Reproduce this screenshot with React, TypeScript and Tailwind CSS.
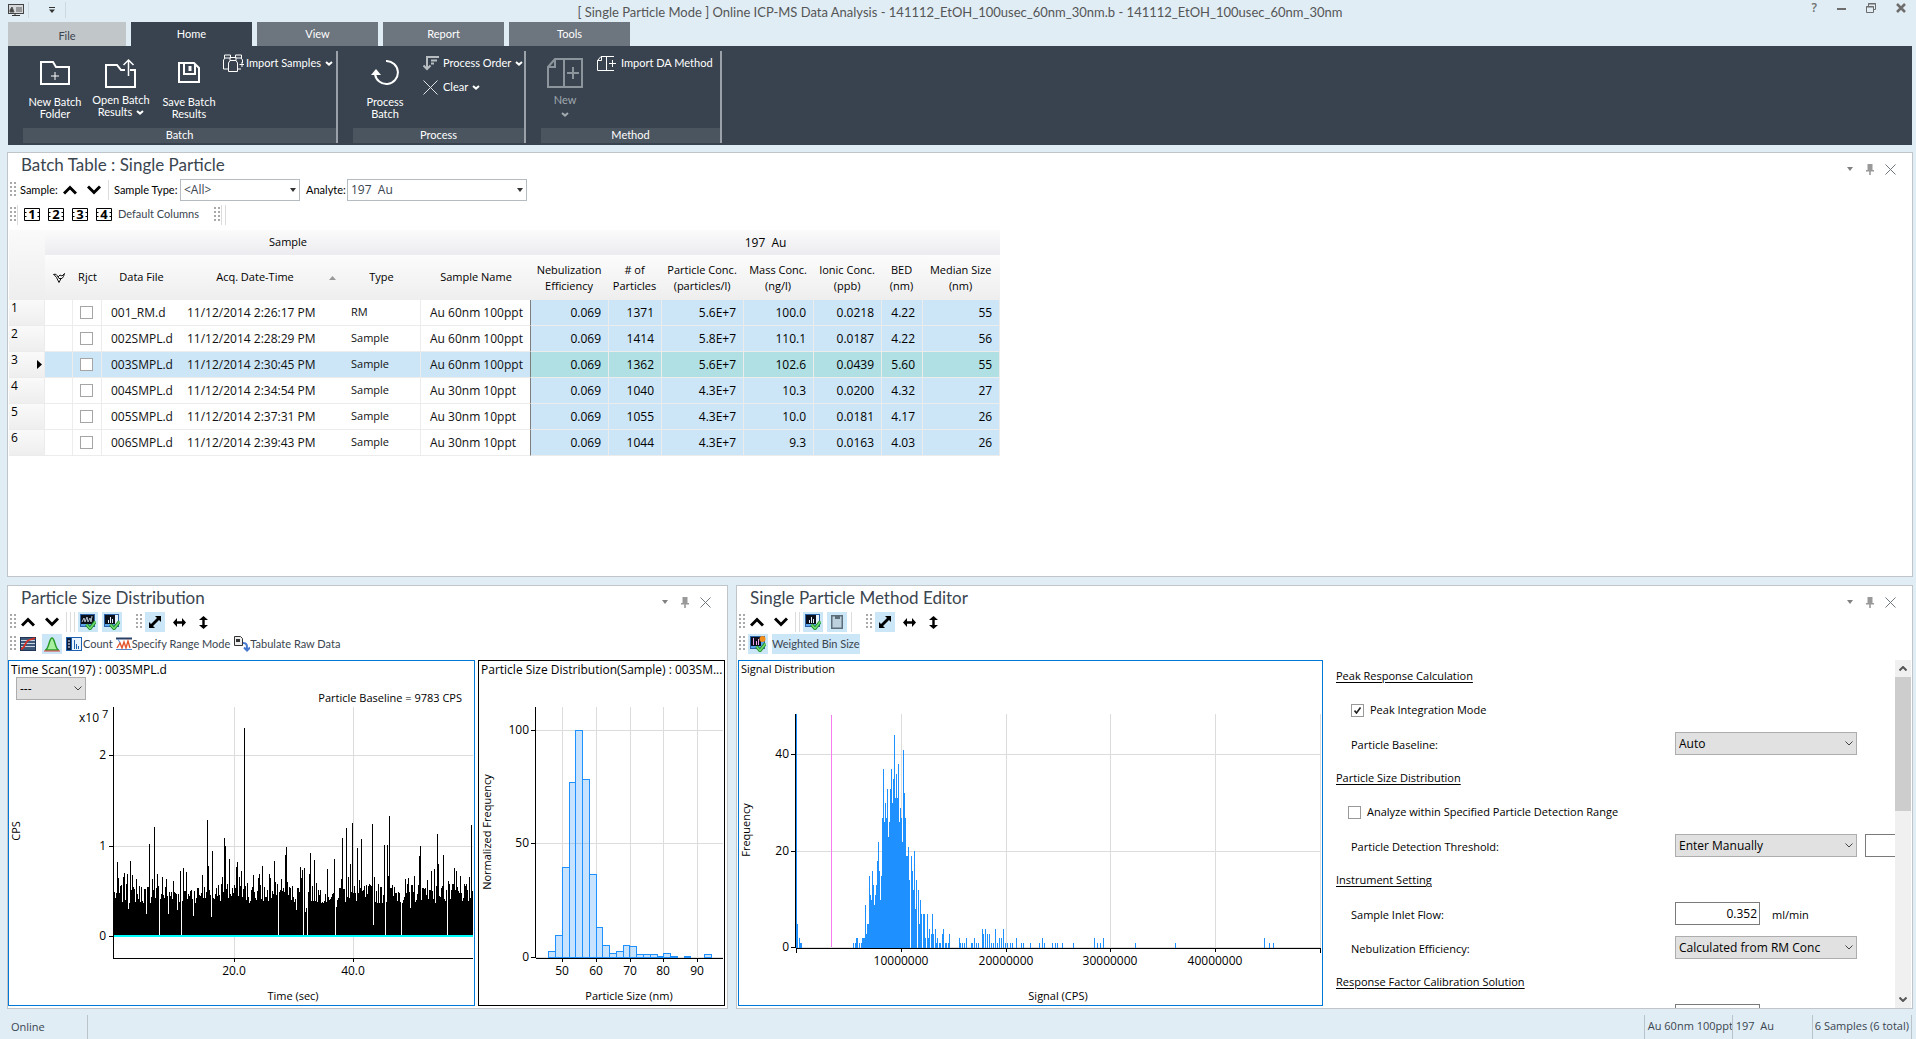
import { useState } from 'react';
import type { ReactNode } from 'react';

const samples = [
  { file: '001_RM.d', date: '11/12/2014 2:26:17 PM', type: 'RM', name: 'Au 60nm 100ppt', values: ['0.069', '1371', '5.6E+7', '100.0', '0.0218', '4.22', '55'] },
  { file: '002SMPL.d', date: '11/12/2014 2:28:29 PM', type: 'Sample', name: 'Au 60nm 100ppt', values: ['0.069', '1414', '5.8E+7', '110.1', '0.0187', '4.22', '56'] },
  { file: '003SMPL.d', date: '11/12/2014 2:30:45 PM', type: 'Sample', name: 'Au 60nm 100ppt', values: ['0.069', '1362', '5.6E+7', '102.6', '0.0439', '5.60', '55'] },
  { file: '004SMPL.d', date: '11/12/2014 2:34:54 PM', type: 'Sample', name: 'Au 30nm 10ppt', values: ['0.069', '1040', '4.3E+7', '10.3', '0.0200', '4.32', '27'] },
  { file: '005SMPL.d', date: '11/12/2014 2:37:31 PM', type: 'Sample', name: 'Au 30nm 10ppt', values: ['0.069', '1055', '4.3E+7', '10.0', '0.0181', '4.17', '26'] },
  { file: '006SMPL.d', date: '11/12/2014 2:39:43 PM', type: 'Sample', name: 'Au 30nm 10ppt', values: ['0.069', '1044', '4.3E+7', '9.3', '0.0163', '4.03', '26'] },
];

const resultColumns = [
  ['Nebulization', 'Efficiency'],
  ['# of', 'Particles'],
  ['Particle Conc.', '(particles/l)'],
  ['Mass Conc.', '(ng/l)'],
  ['Ionic Conc.', '(ppb)'],
  ['BED', '(nm)'],
  ['Median Size', '(nm)'],
];

// [bin, height] of the peaks, dips and empty bins in the time scan
const scanPoints: [number, number][] = [
  [3, 74], [4, 58], [9, 59], [10, 63], [13, 62], [14, 27], [16, 75], [18, 61], [22, 57], [32, 22], [35, 92], [38, 57],
  [40, 109], [43, 62], [45, 0], [48, 59], [52, 57], [54, 22], [59, 55], [63, 26], [66, 65], [67, 0], [69, 68], [72, 64],
  [79, 20], [88, 61], [93, 116], [94, 70], [97, 19], [98, 85], [104, 51], [108, 59], [110, 98], [111, 90], [115, 77],
  [122, 69], [123, 74], [125, 59], [127, 65], [130, 208], [133, 53], [139, 61], [144, 58], [145, 62], [148, 70],
  [155, 62], [156, 58], [160, 75], [161, 54], [164, 0], [167, 57], [171, 81], [172, 89], [173, 54], [182, 26],
  [186, 69], [187, 58], [188, 66], [189, 0], [190, 68], [191, 24], [192, 28], [193, 0], [195, 62], [196, 83],
  [200, 76], [202, 53], [213, 67], [220, 77], [221, 0], [222, 29], [227, 57], [228, 98], [232, 108], [234, 59],
  [236, 72], [238, 113], [243, 88], [245, 56], [247, 97], [258, 112], [259, 11], [260, 59], [270, 91], [271, 0],
  [273, 91], [274, 60], [275, 120], [287, 0], [291, 57], [294, 58], [296, 28], [300, 60], [305, 80], [306, 90],
  [313, 56], [317, 65], [320, 67], [323, 102], [324, 72], [329, 81], [333, 0], [334, 55], [340, 68], [342, 65],
  [346, 60], [355, 59], [357, 111],
];

const scanBins = (() => {
  let seed = 7;
  const bins = Array.from({ length: 359 }, () => {
    seed = (seed * 1103515245 + 12345) % 2147483648;
    return 33 + Math.floor((seed / 2147483648) * 20);
  });
  scanPoints.forEach(([bin, height]) => {
    bins[bin] = height;
  });
  return bins;
})();

// x, width, height
const sizeBars: [number, number, number][] = [
  [69, 7, 6], [76, 7, 22], [83, 7, 90], [90, 6, 175], [96, 7, 227], [103, 7, 178], [110, 7, 83], [117, 6, 30],
  [123, 7, 12], [130, 7, 4], [137, 7, 6], [144, 6, 12], [150, 7, 11], [157, 7, 3], [164, 7, 3], [171, 7, 3],
  [178, 6, 1], [184, 7, 4], [191, 7, 1], [205, 6, 1], [225, 7, 3],
];

const mainPeak = [
  9, 3, 5, 5, 15, 11, 10, 16, 13, 9, 11, 13, 18, 22, 16, 10, 15, 27, 37, 26, 30, 27, 33, 23, 26, 33, 37, 30, 35, 44,
  31, 36, 31, 38, 26, 29, 27, 22, 41, 32, 27, 19, 19, 21, 14, 0, 19, 16, 12, 20, 8, 14, 0, 12, 5, 10, 7, 0, 7, 7, 2, 0,
  7, 2, 4, 0, 3, 7, 3, 0, 4, 1, 2, 0, 1, 1, 0, 3, 4, 0, 1, 1, 0, 1, 3,
];

const signalTail: [number, number][] = [
  [58, 5], [60, 2], [61, 1], [62, 1], [114, 1], [116, 1], [117, 2], [118, 2], [120, 1], [122, 1], [123, 2], [124, 2], [125, 2],
  [220, 2], [221, 1], [223, 1], [225, 1], [227, 2], [232, 1], [233, 1], [235, 2], [237, 1], [239, 1], [243, 4], [244, 3],
  [246, 4], [248, 3], [250, 3], [252, 1], [254, 1], [256, 4], [258, 1], [260, 2], [262, 2], [264, 4], [266, 1], [268, 1],
  [271, 1], [273, 1], [277, 2], [282, 1], [284, 1], [291, 1], [300, 1], [303, 2], [305, 1], [313, 1], [316, 1], [318, 1],
  [323, 1], [334, 1], [355, 2], [358, 1], [361, 1], [364, 2], [396, 1], [436, 1], [525, 2], [530, 1], [534, 1],
];

const signalBars: [number, number][] = [...signalTail, ...mainPeak.map((n, i): [number, number] => [126 + i, n])];

/* ---------- small pieces ---------- */

const Grip = () => (
  <svg className="w-[7px] h-4 shrink-0" viewBox="0 0 7 16" fill="#a9a9a9">
    {[0, 4, 8, 12].map((y) => (
      <g key={y}>
        <rect x="0" y={y} width="2" height="2" />
        <rect x="4" y={y} width="2" height="2" />
      </g>
    ))}
  </svg>
);

const Divider = () => <span className="w-px h-5 bg-[#dcdcdc] shrink-0" />;

const CaretDown = ({ className = '' }: { className?: string }) => (
  <svg className={`w-2 h-[5px] shrink-0 ${className}`} viewBox="0 0 8 5" fill="none" stroke="currentColor" strokeWidth="2">
    <path d="M1 1l3 2.6L7 1" />
  </svg>
);

const IconButton = ({ label, active, children }: { label: string; active?: boolean; children: ReactNode }) => (
  <button aria-label={label} className={`w-5 h-5 shrink-0 flex items-center justify-center ${active ? 'bg-[#cbe6f7]' : ''}`}>
    {children}
  </button>
);

const ChevronUp = () => (
  <svg className="w-3.5 h-2.5" viewBox="0 0 14 10" fill="none" stroke="#000" strokeWidth="3">
    <path d="M1 8.500l6-6 6 6" />
  </svg>
);

const ChevronDown = () => (
  <svg className="w-3.5 h-2.5" viewBox="0 0 14 10" fill="none" stroke="#000" strokeWidth="3">
    <path d="M1 1.500l6 6 6-6" />
  </svg>
);

const ChartCheck = ({ variant }: { variant: 'scan' | 'bars' | 'pink' }) => (
  <svg className="w-4 h-4" viewBox="0 0 16 16">
    <rect x="0.5" y="0.5" width="14" height="12" fill="#5ba3ea" stroke="#2b62a8" />
    <rect x="1" y="1" width={variant === 'scan' ? 13 : 10} height="9" fill="#0b0f1c" />
    {variant === 'scan' && <path d="M2 8l2-4 1 4 2-5 1 5 2-4 1 4 1-6" fill="none" stroke="#b9c4d2" />}
    {variant === 'bars' && <path d="M4.500 9V6M6.500 9V3M8.500 9V5" fill="none" stroke="#e8f2ff" />}
    {variant === 'bars' && <path d="M11 1h3v9h-3z" fill="#e8f2ff" />}
    {variant === 'pink' && <path d="M3.500 9V2M6.500 9V5M8.500 9V3" fill="none" stroke="#f0a6ee" />}
    {variant === 'pink' && <circle cx="12.500" cy="3" r="3" fill="#ef8c1b" />}
    <path d="M6.500 10.500l3.500 4 5.500-7" fill="none" stroke="#1c8a25" strokeWidth="3.400" />
    <path d="M6.500 10.500l3.500 4 5.500-7" fill="none" stroke="#6fd873" strokeWidth="1.600" />
  </svg>
);

const ZoomButtons = () => (
  <div className="flex gap-1 ml-0.5">
    <IconButton label="Zoom both axes" active>
      <svg className="w-3 h-3" viewBox="0 0 12 12">
        <path d="M6 0h6v6l-2-2-6 6 2 2H0V6l2 2 6-6z" fill="#000" />
      </svg>
    </IconButton>
    <IconButton label="Zoom horizontal axis">
      <svg className="w-[13px] h-[9px]" viewBox="0 0 13 9">
        <path d="M4 0v3.300h5V0l4 4.500L9 9V5.700H4V9L0 4.500z" fill="#000" />
      </svg>
    </IconButton>
    <IconButton label="Zoom vertical axis">
      <svg className="w-[9px] h-[13px]" viewBox="0 0 9 13">
        <path d="M0 4h3.300v5H0l4.500 4L9 9H5.700V4H9L4.500 0z" fill="#000" />
      </svg>
    </IconButton>
  </div>
);

const StepButtons = ({ what }: { what: string }) => (
  <div className="flex gap-1 mr-1">
    <IconButton label={`Previous ${what}`}><ChevronUp /></IconButton>
    <IconButton label={`Next ${what}`}><ChevronDown /></IconButton>
  </div>
);

const PanelHeader = ({ title }: { title: string }) => (
  <header className="flex justify-between pl-[13px] pr-3 h-[26px] shrink-0">
    <h2 className="font-[Lato,sans-serif] text-[17px] leading-6 text-[#3a4550]">{title}</h2>
    <div className="flex items-center mt-2 h-4 text-[#808080]">
      <button aria-label="Panel menu" className="w-5">
        <svg className="w-1.5 h-1 mx-auto" viewBox="0 0 6 4" fill="currentColor">
          <path d="M0 0h6L3 4z" />
        </svg>
      </button>
      <button aria-label="Pin panel" className="w-5">
        <svg className="w-2 h-[11px] mx-auto" viewBox="0 0 8 11" fill="#999">
          <path d="M1.500 0h5v6H8v1.500H4.800V11H3.200V7.500H0V6h1.500z" />
        </svg>
      </button>
      <button aria-label="Close panel" className="w-5">
        <svg className="w-[11px] h-[11px] mx-auto" viewBox="0 0 11 11" stroke="#70777d" fill="none">
          <path d="M.5.5l10 10M10.500.5l-10 10" />
        </svg>
      </button>
    </div>
  </header>
);

const FlatSelect = ({ id, value, className }: { id: string; value: string; className: string }) => (
  <div className={`relative ${className}`}>
    <select id={id} className="appearance-none block w-full h-[22px] border border-[#b5bcc1] bg-white pl-[3px] font-['Open_Sans',sans-serif] text-xs text-[#3a4550] whitespace-pre">
      <option>{value}</option>
    </select>
    <svg className="absolute right-1 top-[9px] w-1.5 h-1 pointer-events-none" viewBox="0 0 6 4">
      <path d="M0 0h6L3 4z" fill="#333" />
    </svg>
  </div>
);

const GraySelect = ({ id, label, value, className }: { id: string; label?: string; value: string; className: string }) => (
  <div className={`relative ${className}`}>
    <select id={id} aria-label={label} className="appearance-none block w-full h-[23px] border border-[#adadad] bg-[#e1e1e1] pl-[3px] text-xs">
      <option>{value}</option>
    </select>
    <svg className="absolute right-1 top-[9px] w-2 h-[5px] pointer-events-none" viewBox="0 0 8 5">
      <path d="M.5.5L4 4 7.500.5" fill="none" stroke="#444" />
    </svg>
  </div>
);

/* ---------- ribbon ---------- */

const BigButton = ({ icon, lines, menu, disabled, className }: { icon: ReactNode; lines: string[]; menu?: boolean; disabled?: boolean; className: string }) => (
  <button disabled={disabled} className={`flex flex-col items-center shrink-0 ${disabled ? 'text-[#a1a8ae]' : 'text-white'} ${className}`}>
    <span className="h-[43px] flex items-center">{icon}</span>
    <span className={`text-[11px] leading-3 text-center ${menu ? '' : 'pt-0.5'}`}>
      {lines.map((line, i) => (
        <span key={line} className="flex items-center justify-center gap-1">
          {line}
          {menu && i === 1 && <CaretDown />}
        </span>
      ))}
    </span>
    {menu && lines.length === 1 && <CaretDown className="mt-1.5" />}
  </button>
);

const SmallButton = ({ icon, label, menu, iconBox = 'w-5' }: { icon: ReactNode; label: string; menu?: boolean; iconBox?: string }) => (
  <button className="flex items-center h-6 text-[11px] text-white whitespace-nowrap">
    <span className={`flex justify-start shrink-0 ${iconBox}`}>{icon}</span>
    {label}
    {menu && <CaretDown className="ml-1" />}
  </button>
);

const RibbonGroup = ({ name, className, children }: { name: string; className: string; children: ReactNode }) => (
  <section className={`flex flex-col mt-[5px] mb-0.5 border-r-2 border-[#9aa1a8] ${className}`}>
    <div className="flex flex-1">{children}</div>
    <h3 className="h-[15px] bg-[#4b5560] text-[11px] leading-[14px] text-center text-white">{name}</h3>
  </section>
);

const Ribbon = () => {
  const [tab, setTab] = useState('Home');
  return (
    <div className="ml-2 mr-1 font-[Lato,sans-serif]">
      <nav className="flex gap-[5px] h-6 text-[11px]">
        <button className="w-[118px] bg-[#c1c6c8] text-[#3a4550] pt-1">File</button>
        {['Home', 'View', 'Report', 'Tools'].map((name) => (
          <button
            key={name}
            onClick={() => setTab(name)}
            className={`w-[121px] text-white ${tab === name ? 'bg-[#38434f]' : 'bg-[#6d757e]'}`}
          >
            {name}
          </button>
        ))}
      </nav>
      <div className="flex gap-[15px] pl-[15px] h-[99px] bg-[#38434f]">
        <RibbonGroup name="Batch" className="w-[315px]">
          <BigButton
            className="w-16"
            lines={['New Batch', 'Folder']}
            icon={
              <svg className="w-[30px] h-6" viewBox="0 0 30 24" fill="none" stroke="#fff" strokeWidth="2">
                <path d="M1 23V1h12l3 5h13v17z" />
                <path d="M15 11v8M11 15h8" strokeWidth="1" />
              </svg>
            }
          />
          <BigButton
            className="w-[68px]"
            lines={['Open Batch', 'Results']}
            menu
            icon={
              <svg className="w-8 h-[30px]" viewBox="0 0 32 30" fill="none" stroke="#fff" strokeWidth="2">
                <path d="M20 12h-4l-4-5H1v22h29V12h-5" />
                <path d="M23.500 18V2M18.500 7l5-5 5 5" strokeWidth="1.500" />
              </svg>
            }
          />
          <BigButton
            className="w-[68px]"
            lines={['Save Batch', 'Results']}
            icon={
              <svg className="w-[22px] h-[21px]" viewBox="0 0 22 21" fill="none" stroke="#fff" strokeWidth="2">
                <path d="M1 1h15l5 5v14H1zM6 1v11h11V2" />
                <path d="M12 4v5" strokeWidth="3" />
              </svg>
            }
          />
          <div>
            <SmallButton
              label="Import Samples"
              menu
              iconBox="w-[23px]"
              icon={
                <svg className="w-[21px] h-[18px]" viewBox="0 0 21 18" fill="none" stroke="#fff">
                  <path d="M1.500 1h6v3h-6zM12.500 1h6v3h-6zM7 3.500h6v3H7zM2 4L.5 6v9H5M18 4l1.500 2v3M7 6.500L5.500 9v8.500h9V9L13 6.500M15 15h3" />
                  <path d="M19 8v5M16.500 10.500H21" />
                </svg>
              }
            />
          </div>
        </RibbonGroup>
        <RibbonGroup name="Process" className="w-[173px]">
          <BigButton
            className="w-16"
            lines={['Process', 'Batch']}
            icon={
              <svg className="w-7 h-[26px]" viewBox="0 0 28 26" fill="none" stroke="#fff" strokeWidth="2">
                <path d="M15 1a11.500 11.500 0 1 1-11 13" />
                <path d="M5 9l5 6H0z" fill="#fff" stroke="none" />
              </svg>
            }
          />
          <div className="pl-1.5">
            <SmallButton
              label="Process Order"
              menu
              icon={
                <svg className="w-4 h-[15px]" viewBox="0 0 16 15" fill="none" stroke="#b8bdc2" strokeWidth="2">
                  <path d="M4 1v12M.5 9.500L4 13l3.500-3.500" />
                  <path d="M3 1h13M8 4.500h6M8 7.500h3" />
                </svg>
              }
            />
            <SmallButton
              label="Clear"
              menu
              icon={
                <svg className="w-[15px] h-[15px]" viewBox="0 0 15 15" fill="none" stroke="#dfe2e4">
                  <path d="M.5.5l14 14M14.500.5l-14 14" />
                </svg>
              }
            />
          </div>
        </RibbonGroup>
        <RibbonGroup name="Method" className="w-[181px]">
          <BigButton
            className="w-12"
            lines={['New']}
            menu
            disabled
            icon={
              <svg className="w-9 h-[30px]" viewBox="0 0 36 30" fill="none" stroke="#8d959c" strokeWidth="2">
                <path d="M8 1h27v28H1V9zM8 1v8H1M17 1v28M20 15h12M26 9v12" />
              </svg>
            }
          />
          <div className="pl-2">
            <SmallButton
              label="Import DA Method"
              iconBox="w-6"
              icon={
                <svg className="w-[19px] h-[15px] shrink-0" viewBox="0 0 19 15" fill="none" stroke="#fff">
                  <path d="M17 .5H4l-3.500 4v10H17M4.500.5v4H.5M9.500.5v14M12 7.500h7M15.500 4v7" />
                </svg>
              }
            />
          </div>
        </RibbonGroup>
      </div>
    </div>
  );
};

/* ---------- batch table ---------- */

const BatchTable = () => (
  <table className="table-fixed border-separate border-spacing-0 w-[991px] ml-px mt-1 text-xs text-black">
    <colgroup>
      <col className="w-9" />
      <col className="w-7" />
      <col className="w-[29px]" />
      <col className="w-[79px]" />
      <col className="w-[161px]" />
      <col className="w-[79px]" />
      <col className="w-[110px]" />
      <col className="w-[78px]" />
      <col className="w-[53px]" />
      <col className="w-[82px]" />
      <col className="w-[70px]" />
      <col className="w-[68px]" />
      <col className="w-[41px]" />
      <col className="w-[77px]" />
    </colgroup>
    <thead className="text-[11px]">
      <tr className="h-[25px]">
        <th rowSpan={2} aria-label="Row" className="bg-linear-to-b from-[#fafafa] to-[#eeeeee]" />
        <th colSpan={6} className="font-normal bg-linear-to-b from-[#fbfbfb] to-[#ececf0]">Sample</th>
        <th colSpan={7} className="text-xs font-normal bg-linear-to-b from-[#fbfbfb] to-[#ececf0] whitespace-pre">197  Au</th>
      </tr>
      <tr className="h-[45px] bg-linear-to-b from-[#fcfcfc] to-[#eeeeee]">
        <th aria-label="Flag">
          <svg className="w-3 h-2.5 mx-auto" viewBox="0 0 12 10" fill="none" stroke="#111">
            <path d="M.5 1l3 3.500L6 9.500M.5 1.500C3 .5 4 2 5 4l2-2 2 1 2.500-2.500-1 3-1.500 2H6l-1-1.500M6 9.500l2-4" />
          </svg>
        </th>
        <th className="font-normal">Rjct</th>
        <th className="font-normal">Data File</th>
        <th className="font-normal">
          <span className="flex items-center pr-1.5">
            <span className="flex-1">Acq. Date-Time</span>
            <svg className="w-[7px] h-1" viewBox="0 0 7 4">
              <path d="M0 4h7L3.500 0z" fill="#999" />
            </svg>
          </span>
        </th>
        <th className="font-normal">Type</th>
        <th className="font-normal">Sample Name</th>
        {resultColumns.map(([top, bottom]) => (
          <th key={top} className="font-normal leading-4 whitespace-nowrap pr-0.5">
            {top}
            <br />
            {bottom}
          </th>
        ))}
      </tr>
    </thead>
    <tbody>
      {samples.map((sample, index) => {
        const selected = index === 2;
        const cell = `border-b border-[#ececec] ${selected ? 'bg-[#cce6f8]' : 'bg-white'}`;
        return (
          <tr key={sample.file} className="h-[26px]">
            <th scope="row" className="relative font-normal text-left align-top pl-0.5 leading-4 border-r border-b border-[#ececec] bg-linear-to-b from-[#fafafa] to-[#eeeeee]">
              {index + 1}
              {selected && (
                <svg className="absolute right-0.5 top-2 w-[5px] h-[9px]" viewBox="0 0 5 9">
                  <path d="M0 0l5 4.500L0 9z" />
                </svg>
              )}
            </th>
            <td className={`${cell} border-r`} />
            <td className={`${cell} border-r pl-[7px]`}>
              <input type="checkbox" aria-label={`Reject ${sample.file}`} className="block appearance-none size-[13px] border border-[#a5a5a5] bg-white" />
            </td>
            <td className={`${cell} pl-[9px] text-[#111]`}>{sample.file}</td>
            <td className={`${cell} pl-1.5 text-[#111] whitespace-nowrap`}>{sample.date}</td>
            <td className={`${cell} border-r pl-[9px] text-[11px] text-[#111]`}>{sample.type}</td>
            <td className={`${cell} border-r border-r-[#7f7f7f] pl-[9px] text-[#111] whitespace-nowrap`}>{sample.name}</td>
            {sample.values.map((value, i) => (
              <td key={i} className={`border-r border-b border-[#ececec] pr-[7px] text-right ${selected ? 'bg-[#b0dfe4]' : 'bg-[#cce6f8]'}`}>
                {value}
              </td>
            ))}
          </tr>
        );
      })}
    </tbody>
  </table>
);

/* ---------- charts ---------- */

const TimeScanChart = () => (
  <svg className="w-full h-full text-[12px]" viewBox="0 0 465 344" shapeRendering="crispEdges">
    <path d="M104 94.500H464M104 185.500H464M225.500 46V297M344.500 46V297" stroke="#dcdcdc" />
    {scanBins.map((height, bin) => (
      <rect key={bin} x={105 + bin} y={275 - height} width="1" height={height} />
    ))}
    <rect x="104" y="274" width="360" height="2" fill="#00ffff" />
    <path d="M104.500 46V297M104 297.500H464M100 94.500h4M100 185.500h4M100 275.500h4M225.500 297v4M344.500 297v4" stroke="#000" />
    <text x="2" y="13">Time Scan(197) : 003SMPL.d</text>
    <text x="453" y="41" textAnchor="end" fontSize="11">Particle Baseline = 9783 CPS</text>
    <text x="70" y="61">x10</text>
    <text x="93" y="57" fontSize="11">7</text>
    <text x="97" y="98" textAnchor="end">2</text>
    <text x="97" y="189" textAnchor="end">1</text>
    <text x="97" y="279" textAnchor="end">0</text>
    <text x="225" y="314" textAnchor="middle">20.0</text>
    <text x="344" y="314" textAnchor="middle">40.0</text>
    <text x="284" y="339" textAnchor="middle" fontSize="11">Time (sec)</text>
    <text transform="translate(11 170) rotate(-90)" textAnchor="middle" fontSize="11">CPS</text>
  </svg>
);

const SizeChart = () => (
  <svg className="w-full h-full text-[12px]" viewBox="0 0 245 344" shapeRendering="crispEdges">
    <path d="M57 69.500H244M57 182.500H244M57 296.500H244M83.500 46V297M117.500 46V297M151.500 46V297M184.500 46V297M218.500 46V297" stroke="#dcdcdc" />
    {sizeBars.map(([x, width, height]) => (
      <rect key={x} x={x + 0.5} y={296.5 - height} width={width} height={height} fill="#1e90ff" fillOpacity="0.25" stroke="#1e90ff" />
    ))}
    <path d="M56.500 46V297M57 297.500H244M52 69.500h4M52 182.500h4M52 296.500h4M83.500 297v4M117.500 297v4M151.500 297v4M184.500 297v4M218.500 297v4" stroke="#000" />
    <text x="2" y="13">Particle Size Distribution(Sample) : 003SM...</text>
    <text x="50" y="73" textAnchor="end">100</text>
    <text x="50" y="186" textAnchor="end">50</text>
    <text x="50" y="300" textAnchor="end">0</text>
    <text x="83" y="314" textAnchor="middle">50</text>
    <text x="117" y="314" textAnchor="middle">60</text>
    <text x="151" y="314" textAnchor="middle">70</text>
    <text x="184" y="314" textAnchor="middle">80</text>
    <text x="218" y="314" textAnchor="middle">90</text>
    <text x="150" y="339" textAnchor="middle" fontSize="11">Particle Size (nm)</text>
    <text transform="translate(12 171) rotate(-90)" textAnchor="middle" fontSize="11">Normalized Frequency</text>
  </svg>
);

const SignalChart = () => (
  <svg className="w-full h-full text-[12px]" viewBox="0 0 583 344" shapeRendering="crispEdges">
    <path d="M58 93.500H582M58 190.500H582M58 286.500H582M162.500 53V287M267.500 53V287M371.500 53V287M476.500 53V287M581.500 53V287" stroke="#dcdcdc" />
    {signalBars.map(([x, count]) => (
      <rect key={x} x={x} y={287 - Math.round(count * 4.83)} width="1" height={Math.round(count * 4.83)} fill="#1e90ff" />
    ))}
    <path d="M92.500 54V286" stroke="#f67df0" />
    <path d="M56.500 53V287M57 287.500H582M52 93.500h4M52 190.500h4M52 286.500h4M57.500 287v5M162.500 287v4M267.500 287v4M371.500 287v4M476.500 287v4M581.500 287v5" stroke="#000" />
    <path d="M57.500 53V287" stroke="#1e90ff" />
    <text x="2" y="12" fontSize="11">Signal Distribution</text>
    <text x="50" y="97" textAnchor="end">40</text>
    <text x="50" y="194" textAnchor="end">20</text>
    <text x="50" y="290" textAnchor="end">0</text>
    <text x="162" y="304" textAnchor="middle">10000000</text>
    <text x="267" y="304" textAnchor="middle">20000000</text>
    <text x="371" y="304" textAnchor="middle">30000000</text>
    <text x="476" y="304" textAnchor="middle">40000000</text>
    <text x="319" y="339" textAnchor="middle" fontSize="11">Signal (CPS)</text>
    <text transform="translate(11 169) rotate(-90)" textAnchor="middle" fontSize="11">Frequency</text>
  </svg>
);

/* ---------- method editor ---------- */

const FormHeading = ({ children }: { children: ReactNode }) => (
  <h3 className="h-[34px] leading-8 underline underline-offset-2">{children}</h3>
);

const FormRow = ({ id, label, children }: { id: string; label: string; children: ReactNode }) => (
  <div className="h-[34px] pl-[15px] flex items-start shrink-0 leading-[34px]">
    <label htmlFor={id} className="w-[324px] shrink-0">{label}</label>
    {children}
  </div>
);

const FormCheck = ({ label, className, defaultChecked }: { label: string; className: string; defaultChecked?: boolean }) => {
  const [checked, setChecked] = useState(Boolean(defaultChecked));
  return (
    <div className={`h-[34px] pb-0.5 flex items-center ${className}`}>
      <label className="flex items-center gap-1.5">
        <span className="relative">
          <input
            type="checkbox"
            checked={checked}
            onChange={() => setChecked(!checked)}
            className="block appearance-none size-[13px] border border-[#999] bg-white"
          />
          {checked && (
            <svg className="absolute left-[3px] top-[3px] size-[7px] pointer-events-none" viewBox="0 0 7 7">
              <path d="M.5 3.500l2 2.500L6.500.5" fill="none" stroke="#222" strokeWidth="1.600" />
            </svg>
          )}
        </span>
        {label}
      </label>
    </div>
  );
};

const MethodForm = () => (
  <div className="flex flex-1 min-w-0 overflow-hidden">
    <div className="flex-1 min-w-0 overflow-hidden pl-[13px] text-[11px] text-black whitespace-nowrap">
      <FormHeading>Peak Response Calculation</FormHeading>
      <FormCheck label="Peak Integration Mode" className="pl-[15px]" defaultChecked />
      <FormRow id="baseline" label="Particle Baseline:">
        <GraySelect id="baseline" value="Auto" className="w-[182px] mt-1 shrink-0" />
      </FormRow>
      <FormHeading>Particle Size Distribution</FormHeading>
      <FormCheck label="Analyze within Specified Particle Detection Range" className="pl-3" />
      <FormRow id="threshold" label="Particle Detection Threshold:">
        <GraySelect id="threshold" value="Enter Manually" className="w-[182px] mt-1 shrink-0" />
        <input aria-label="Threshold value" className="ml-2 mt-1 w-[85px] h-[23px] shrink-0 border border-[#7a7a7a] bg-white" />
      </FormRow>
      <FormHeading>Instrument Setting</FormHeading>
      <FormRow id="flow" label="Sample Inlet Flow:">
        <input id="flow" defaultValue="0.352" className="w-[85px] h-[23px] mt-1 shrink-0 border border-[#7a7a7a] bg-white px-0.5 text-xs text-right" />
        <span className="ml-3">ml/min</span>
      </FormRow>
      <FormRow id="nebulization" label="Nebulization Efficiency:">
        <GraySelect id="nebulization" value="Calculated from RM Conc" className="w-[182px] mt-1 shrink-0" />
      </FormRow>
      <FormHeading>Response Factor Calibration Solution</FormHeading>
      <div className="h-[34px] pl-[339px] flex items-start">
        <input aria-label="Calibration value" className="w-[85px] h-[23px] mt-1 shrink-0 border border-[#7a7a7a] bg-white" />
      </div>
    </div>
    <div className="flex flex-col w-4 mr-px bg-[#f0f0f0] shrink-0">
      <button aria-label="Scroll up" className="h-[17px] flex items-center justify-center">
        <svg className="w-2 h-[5px]" viewBox="0 0 8 5" fill="none" stroke="#555" strokeWidth="2">
          <path d="M.5 4.500L4 1l3.500 3.500" />
        </svg>
      </button>
      <div className="flex-1">
        <div className="h-3/5 max-h-[134px] bg-[#cdcdcd]" />
      </div>
      <button aria-label="Scroll down" className="h-[17px] flex items-center justify-center">
        <svg className="w-2 h-[5px]" viewBox="0 0 8 5" fill="none" stroke="#555" strokeWidth="2">
          <path d="M.5.5L4 4 7.500.5" />
        </svg>
      </button>
    </div>
  </div>
);

/* ---------- page ---------- */

const ColumnSet = ({ n }: { n: number }) => (
  <button aria-label={`Column set ${n}`} className="relative w-4 h-[13px] shrink-0 flex items-center justify-center">
    <svg className="absolute inset-0 w-4 h-[13px]" viewBox="0 0 16 13" fill="none" stroke="#000">
      <path d="M4 .5H.5v12H4M12 .5h3.500v12H12M.5 4.500h2M.5 8.500h2M13.500 4.500h2M13.500 8.500h2M4 .5h8M4 12.500h8" />
    </svg>
    <span className="relative text-[13px] leading-[13px] font-bold text-black">{n}</span>
  </button>
);

const panel = 'flex flex-col min-w-0 min-h-0 overflow-hidden border border-[#bfc5c9] bg-white';

const App = () => (
  <div className="flex flex-col h-screen min-h-[800px] overflow-hidden bg-[#e0edf5] font-['Open_Sans','Noto_Sans',sans-serif]">
    {/* Title bar */}
    <header className="flex items-start justify-between h-[22px] shrink-0 pl-2 pr-2.5">
      <div className="flex items-center gap-1 h-5 w-[166px]">
        <svg className="w-4 h-3" viewBox="0 0 16 12" fill="none">
          <rect x="0.5" y="0.5" width="15" height="9" fill="#d5d9dc" stroke="#444" />
          <path d="M2 8V6l2-3 2 5zM9 3v5M11 3v5M13 3v5" fill="#444" stroke="#555" />
          <path d="M4 11.500h8M7 10v1" stroke="#333" />
        </svg>
        <span className="w-px h-4 bg-[#cdd8df]" />
        <button aria-label="Customize quick access" className="w-[22px] flex justify-end">
          <svg className="w-1.5 h-1.5" viewBox="0 0 6 6">
            <path d="M0 0h6v1H0zM0 2.500h6L3 6z" fill="#333" />
          </svg>
        </button>
        <span className="w-px h-4 ml-1.5 bg-[#cdd8df]" />
      </div>
      <h1 className="font-[Lato,sans-serif] text-[13px] leading-6 text-[#555]">
        [ Single Particle Mode ] Online ICP-MS Data Analysis - 141112_EtOH_100usec_60nm_30nm.b - 141112_EtOH_100usec_60nm_30nm
      </h1>
      <div className="flex items-center justify-end gap-5 h-4 w-40 text-[#6d6d6d]">
        <button className="text-xs font-semibold leading-4">?</button>
        <button aria-label="Minimize">
          <svg className="w-[9px] h-[9px]" viewBox="0 0 9 9">
            <path d="M0 4h9v2H0z" fill="currentColor" />
          </svg>
        </button>
        <button aria-label="Restore">
          <svg className="w-2.5 h-2.5" viewBox="0 0 10 10" fill="none" stroke="currentColor">
            <path d="M2.500 3V.5h7v6H8M2 1h8M.5 3.500h7v6h-7zM0 4h8" />
          </svg>
        </button>
        <button aria-label="Close">
          <svg className="w-2.5 h-2.5" viewBox="0 0 10 10" fill="none" stroke="currentColor" strokeWidth="2.500">
            <path d="M1 1l8 8M9 1L1 9" />
          </svg>
        </button>
      </div>
    </header>

    <Ribbon />

    <main className="grid grid-rows-[425fr_424fr] flex-1 min-h-0 gap-2 pt-[7px] pl-[7px] pr-[3px]">
      <section className={panel}>
        <PanelHeader title="Batch Table : Single Particle" />
        <div className="flex items-center h-[22px] pl-0.5 font-[Lato,sans-serif] text-[11px] text-black whitespace-nowrap shrink-0">
          <Grip />
          <span className="ml-[3px] w-10">Sample:</span>
          <StepButtons what="sample" />
          <Divider />
          <label htmlFor="sample-type" className="ml-[5px] w-[66px]">Sample Type:</label>
          <FlatSelect id="sample-type" value="<All>" className="w-[120px] mr-1.5" />
          <label htmlFor="analyte" className="w-[41px]">Analyte:</label>
          <FlatSelect id="analyte" value={'197\u00a0 Au'} className="w-[180px]" />
        </div>
        <div className="flex items-center h-[25px] pt-0.5 pl-0.5 shrink-0">
          <Grip />
          <Divider />
          <div className="flex gap-2 ml-1.5 mr-1.5">
            {[1, 2, 3, 4].map((n) => (
              <ColumnSet key={n} n={n} />
            ))}
          </div>
          <button className="w-[96px] text-left font-[Lato,sans-serif] text-[11px] text-[#3a4550]">Default Columns</button>
          <Grip />
          <Divider />
          <span className="w-[3px]" />
          <Divider />
        </div>
        <BatchTable />
      </section>

      <div className="grid grid-cols-[721fr_1177fr] gap-2 min-h-0">
        <section className={panel}>
          <PanelHeader title="Particle Size Distribution" />
          <div className="flex items-center h-5 pl-0.5 shrink-0">
            <Grip />
            <span className="w-px" />
            <StepButtons what="sample" />
            <div className="flex gap-[3px] mr-[3px]">
              <Divider />
              <Divider />
              <Divider />
            </div>
            <div className="flex gap-1 mr-3.5">
              <IconButton label="Show time scan" active><ChartCheck variant="scan" /></IconButton>
              <IconButton label="Show distribution" active><ChartCheck variant="bars" /></IconButton>
            </div>
            <Grip />
            <ZoomButtons />
          </div>
          <div className="flex items-center h-7 pb-1 pl-0.5 font-[Lato,sans-serif] text-[11px] text-[#3a4550] whitespace-nowrap shrink-0">
            <Grip />
            <span className="w-px" />
            <div className="flex gap-1 mr-1">
              <IconButton label="Overlay">
                <svg className="w-4 h-3.5" viewBox="0 0 16 14">
                  <rect x="0.5" y="0.5" width="15" height="13" fill="#3f5878" stroke="#1f3557" />
                  <path d="M1 3.500h14M1 6.500h14M1 9.500h14" stroke="#c9d6e6" />
                  <path d="M1 12c4 0 4-8 8-9s4-1 6-2" fill="none" stroke="#d93025" strokeWidth="1.800" />
                </svg>
              </IconButton>
              <IconButton label="Fit curve" active>
                <svg className="w-4 h-4" viewBox="0 0 16 16">
                  <path d="M1 14c4 0 4-12 7-12s3 12 7 12z" fill="#a8f0a0" stroke="#2a9a2a" strokeWidth="1.500" />
                  <path d="M0 15h16" stroke="#e04040" />
                </svg>
              </IconButton>
            </div>
            <button className="flex items-center">
              <svg className="w-4 h-3.5 mr-px" viewBox="0 0 16 14">
                <rect width="16" height="14" fill="#1f5fb0" />
                <rect x="1" y="1" width="4" height="12" fill="#0d1e3c" />
                <rect x="6" y="1" width="9" height="12" fill="#eaf4ff" />
                <path d="M2 4h2M2 7h2M2 10h2" stroke="#fff" />
                <path d="M8.500 12V3M10.500 12V7M12.500 12V9" stroke="#1f5fb0" />
              </svg>
              Count
            </button>
            <button className="flex items-center ml-[3px]">
              <svg className="w-4 h-3.5" viewBox="0 0 16 14">
                <path d="M0 1.500h16" stroke="#2a3f66" strokeWidth="2" />
                <path d="M0 12.500h16M2 2l2 4" stroke="#4d8ad6" fill="none" />
                <path d="M1 11l3-5 2 5 2-6 2 6 2-7 2 7" fill="none" stroke="#e4552b" strokeWidth="1.400" />
              </svg>
              Specify Range Mode
            </button>
            <button className="flex items-center ml-1">
              <svg className="w-4 h-4" viewBox="0 0 16 16">
                <path d="M.5.5h6l2 2v7h-8z" fill="#eee" stroke="#333" />
                <path d="M2 3h4v3H2z" fill="#333" />
                <path d="M9 7c4 0 4 2 4 6M10 11.500l3 3 3-3" fill="none" stroke="#4678cf" strokeWidth="2" />
              </svg>
              Tabulate Raw Data
            </button>
          </div>
          <div className="grid grid-cols-[467fr_247fr] gap-[3px] flex-1 min-h-0 pr-0.5 pb-0.5">
            <div className="relative border border-[#0078d7] min-w-0 min-h-0">
              <TimeScanChart />
              <GraySelect id="trace" label="Trace" value="---" className="absolute! left-[7px] top-4 w-[70px]" />
            </div>
            <div className="border border-black min-w-0 min-h-0">
              <SizeChart />
            </div>
          </div>
        </section>

        <section className={panel}>
          <PanelHeader title="Single Particle Method Editor" />
          <div className="flex items-center h-5 pl-0.5 shrink-0">
            <Grip />
            <span className="w-px" />
            <StepButtons what="bin" />
            <div className="flex gap-[3px] mr-[3px]">
              <Divider />
              <Divider />
            </div>
            <div className="flex gap-1 mr-1">
              <IconButton label="Show signal" active><ChartCheck variant="bars" /></IconButton>
              <IconButton label="Show editor" active>
                <svg className="w-3 h-3.5" viewBox="0 0 12 14">
                  <rect x="0.75" y="0.75" width="10.500" height="12.500" fill="#bcd0dd" stroke="#5d6e7a" strokeWidth="1.500" />
                  <path d="M4 1h5v3H4z" fill="#5d6e7a" />
                </svg>
              </IconButton>
            </div>
            <Divider />
            <span className="w-3.5" />
            <Grip />
            <ZoomButtons />
          </div>
          <div className="flex items-center h-7 pb-1 pl-0.5 shrink-0">
            <Grip />
            <div className="flex gap-1 ml-0.5">
              <IconButton label="Bin options" active><ChartCheck variant="pink" /></IconButton>
              <button className="h-5 bg-[#cbe6f7] font-[Lato,sans-serif] text-[11px] leading-[18px] text-[#3a4550]">Weighted Bin Size</button>
            </div>
          </div>
          <div className="flex flex-1 min-h-0 overflow-hidden">
            <div className="w-[50%] max-w-[585px] shrink-0 ml-px mb-0.5 border border-[#0078d7]">
              <SignalChart />
            </div>
            <MethodForm />
          </div>
        </section>
      </div>
    </main>

    {/* Status bar */}
    <footer className="flex items-center justify-between h-[30px] shrink-0 pl-[11px] pr-1 pt-1.5 text-[11px] text-[#3a4550]">
      <div className="flex h-full items-center w-[77px] border-r border-[#b9c3ca]">Online</div>
      <div className="flex h-full whitespace-pre leading-[22px]">
        <span className="border-l border-[#b9c3ca] px-[3px] w-[88px]">Au 60nm 100ppt</span>
        <span className="border-l border-[#b9c3ca] px-[3px] w-20">197  Au</span>
        <span className="border-x border-[#b9c3ca] px-0.5">6 Samples (6 total)</span>
      </div>
    </footer>
  </div>
);

export default App;
